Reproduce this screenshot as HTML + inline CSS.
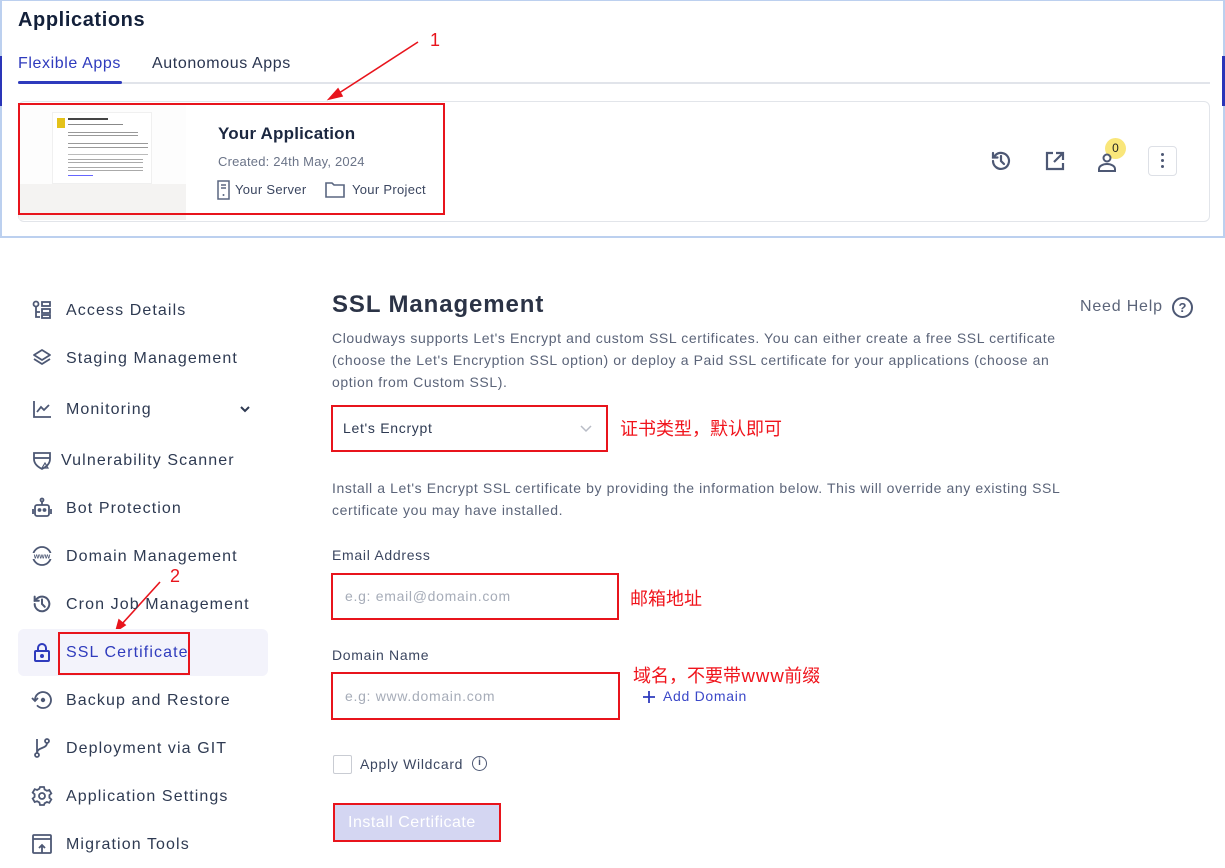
<!DOCTYPE html>
<html><head><meta charset="utf-8"><style>
*{box-sizing:border-box;margin:0;padding:0}
body{width:1225px;height:868px;background:#fff;font-family:"Liberation Sans","Noto Sans CJK SC",sans-serif;position:relative;overflow:hidden;color:#3b4660}
.a{position:absolute;white-space:nowrap}
.red{border:2px solid #e8141c;position:absolute}
.cn{color:#f0141c;font-size:18px;font-family:"Noto Sans CJK SC",sans-serif;letter-spacing:0}
.nav{position:absolute;left:66px;font-size:16px;color:#2e3a52;transform:translateY(-50%);letter-spacing:1.1px;margin-top:1px}
.ic{position:absolute;left:31px;width:22px;height:22px;transform:translateY(-50%)}
.p{font-size:14px;color:#5b6479;line-height:22px;letter-spacing:0.6px}
.s{letter-spacing:0.7px}
</style></head><body>
<!-- top panel -->
<div class="a" style="left:0;top:0;width:1225px;height:238px;border:2px solid #bcd0ef;border-top:1px solid #bcd0ef"></div>
<div class="a" style="left:0;top:56px;width:2px;height:50px;background:#2a35b8"></div>
<div class="a" style="left:1222px;top:56px;width:3px;height:50px;background:#2a35b8"></div>
<div class="a" style="left:18px;top:9px;font-size:20px;font-weight:bold;color:#13203a;letter-spacing:0.6px">Applications</div>
<div class="a" style="left:18px;top:55px;font-size:16px;color:#2f3bbd;letter-spacing:0.6px">Flexible Apps</div>
<div class="a" style="left:152px;top:55px;font-size:16px;color:#2a3550;letter-spacing:0.6px">Autonomous Apps</div>
<div class="a" style="left:18px;top:82px;width:1192px;height:2px;background:#e1e4ea"></div>
<div class="a" style="left:18px;top:81px;width:104px;height:3px;background:#2f3bbd;border-radius:2px"></div>
<div class="a" style="left:18px;top:101px;width:1192px;height:121px;border:1px solid #e2e5ea;border-radius:6px"></div>
<div class="a" style="left:19px;top:104px;width:167px;height:116px;background:#f4f3f2"></div>
<div class="a" style="left:19px;top:104px;width:167px;height:80px;background:#fdfdfd"></div>
<div class="a" style="left:52px;top:112px;width:100px;height:72px;background:#fff;border:1px solid #f0f0f0"></div>
<div class="a" style="left:57px;top:118px;width:8px;height:10px;background:#e4c21a"></div>
<div class="a" style="left:68px;top:118px;width:40px;height:2px;background:#444"></div>
<div class="a" style="left:68px;top:124px;width:55px;height:1px;background:#888"></div>
<div class="a" style="left:68px;top:132px;width:70px;height:4px;border-top:1px solid #999;border-bottom:1px solid #999"></div>
<div class="a" style="left:68px;top:143px;width:80px;height:5px;border-top:1px solid #999;border-bottom:1px solid #999"></div>
<div class="a" style="left:68px;top:154px;width:80px;height:1px;background:#bbb"></div>
<div class="a" style="left:68px;top:159px;width:75px;height:4px;border-top:1px solid #aaa;border-bottom:1px solid #aaa"></div>
<div class="a" style="left:68px;top:167px;width:75px;height:4px;border-top:1px solid #aaa;border-bottom:1px solid #aaa"></div>
<div class="a" style="left:68px;top:175px;width:25px;height:1px;background:#66f"></div>
<div class="a" style="left:218px;top:124px;font-size:17px;font-weight:bold;color:#1b2740;letter-spacing:0.2px">Your Application</div>
<div class="a" style="left:218px;top:154px;font-size:13px;color:#6b7488;letter-spacing:0.2px">Created: 24th May, 2024</div>
<svg class="a" style="left:217px;top:180px" width="14" height="20" viewBox="0 0 14 20"><rect x="1" y="1" width="11" height="18" fill="none" stroke="#5a6680" stroke-width="1.5"/><line x1="4" y1="5" x2="9" y2="5" stroke="#5a6680" stroke-width="1.5"/><line x1="4" y1="8" x2="9" y2="8" stroke="#5a6680" stroke-width="1.5"/><circle cx="6.5" cy="15" r="1" fill="#5a6680"/></svg>
<div class="a" style="left:235px;top:182px;font-size:13px;color:#3b4660;letter-spacing:0.3px">Your Server</div>
<svg class="a" style="left:325px;top:181px" width="20" height="17" viewBox="0 0 20 17"><path d="M1 2h6l2 2h10v12H1z" fill="none" stroke="#5a6680" stroke-width="1.6"/></svg>
<div class="a" style="left:352px;top:182px;font-size:13px;color:#3b4660;letter-spacing:0.3px">Your Project</div>
<div class="red" style="left:18px;top:103px;width:427px;height:112px"></div>
<svg class="a" style="left:0;top:0" width="1225" height="868" viewBox="0 0 1225 868">
<g stroke="#e8141c" stroke-width="1.6" fill="#e8141c"><line x1="418" y1="42" x2="336" y2="95"/><polygon points="329,99 338,89 342,96"/><line x1="160" y1="582" x2="121" y2="625"/><polygon points="116,631 119,620 125,625"/></g>
</svg>
<div class="a" style="left:430px;top:30px;font-size:18px;color:#e8141c">1</div>
<div class="a" style="left:170px;top:566px;font-size:18px;color:#e8141c">2</div>
<!-- right icons -->
<svg class="a" style="left:989px;top:149px" width="24" height="24" viewBox="0 0 24 24" fill="none" stroke="#4d5874" stroke-width="2.2" stroke-linecap="round"><path d="M4 12a8 8 0 1 0 2.3-5.7L4 8.5"/><path d="M4 4v4.5h4.5"/><path d="M12 7v5l3 3"/></svg>
<svg class="a" style="left:1044px;top:150px" width="22" height="22" viewBox="0 0 22 22" fill="none" stroke="#4d5874" stroke-width="2.2"><path d="M9 3H3v16h16v-6"/><path d="M12 3h7v7M19 3l-9 9"/></svg>
<div class="a" style="left:1105px;top:138px;width:21px;height:21px;border-radius:50%;background:#f9e67a;font-size:12px;text-align:center;line-height:21px;color:#222">0</div>
<svg class="a" style="left:1097px;top:152px" width="20" height="20" viewBox="0 0 20 20" fill="none" stroke="#4d5874" stroke-width="2"><circle cx="10" cy="6" r="3.5"/><path d="M2 19v-2c0-3 4-5 8-5s8 2 8 5v2z"/></svg>
<div class="a" style="left:1148px;top:146px;width:29px;height:30px;border:1px solid #dde0e6;border-radius:4px"></div>
<div class="a" style="left:1161px;top:153px;width:3px;height:3px;border-radius:50%;background:#4d5874;box-shadow:0 6px 0 #4d5874,0 12px 0 #4d5874"></div>
<!-- sidebar -->
<div class="a" style="left:18px;top:629px;width:250px;height:47px;background:#f3f3fb;border-radius:6px"></div>
<svg class="ic" style="top:310px" viewBox="0 0 22 22" fill="none" stroke="#4d5874" stroke-width="1.8"><circle cx="5" cy="5" r="2.5"/><path d="M5 8v10h4M5 13h4"/><rect x="11" y="3" width="8" height="4"/><rect x="11" y="10" width="8" height="4"/><rect x="11" y="16" width="8" height="3"/></svg>
<div class="nav" style="top:310px">Access Details</div>
<svg class="ic" style="top:358px" viewBox="0 0 22 22" fill="none" stroke="#4d5874" stroke-width="1.8" stroke-linejoin="round"><path d="M11 3l8 5-8 5-8-5z"/><path d="M3 12l8 5 8-5"/></svg>
<div class="nav" style="top:358px">Staging Management</div>
<svg class="ic" style="top:409px" viewBox="0 0 22 22" fill="none" stroke="#4d5874" stroke-width="1.8"><path d="M3 3v16h17"/><path d="M6 14l4-5 3 3 5-5"/></svg>
<div class="nav" style="top:409px">Monitoring</div>
<svg class="a" style="left:239px;top:404px" width="12" height="10" viewBox="0 0 12 10"><path d="M2 3l4 4 4-4" fill="none" stroke="#2e3a52" stroke-width="2"/></svg>
<svg class="ic" style="top:460px" viewBox="0 0 22 22" fill="none" stroke="#4d5874" stroke-width="1.8"><path d="M3 4h16v6c0 5-4 8-8 10-4-2-8-5-8-10z"/><path d="M3 9h16"/><path d="M14 14l3 5h-6z" stroke-width="1.2"/></svg>
<div class="nav" style="top:460px;left:61px">Vulnerability Scanner</div>
<svg class="ic" style="top:508px" viewBox="0 0 22 22" fill="none" stroke="#4d5874" stroke-width="1.8"><circle cx="11" cy="3" r="1.5"/><path d="M11 5v3"/><rect x="4" y="8" width="14" height="11" rx="2"/><circle cx="8.5" cy="13" r="1" fill="#4d5874"/><circle cx="13.5" cy="13" r="1" fill="#4d5874"/><path d="M2 12v5M20 12v5"/></svg>
<div class="nav" style="top:508px">Bot Protection</div>
<svg class="ic" style="top:556px" viewBox="0 0 22 22"><circle cx="11" cy="11" r="9" fill="none" stroke="#4d5874" stroke-width="1.8"/><rect x="0" y="8" width="22" height="6" fill="#fff"/><text x="11" y="13.5" font-size="7" font-weight="bold" text-anchor="middle" fill="#4d5874" font-family="Liberation Sans">www</text></svg>
<div class="nav" style="top:556px">Domain Management</div>
<svg class="ic" style="top:604px" viewBox="0 0 24 24" fill="none" stroke="#4d5874" stroke-width="2.2" stroke-linecap="round"><path d="M4 12a8 8 0 1 0 2.3-5.7L4 8.5"/><path d="M4 4v4.5h4.5"/><path d="M12 7v5l3 3"/></svg>
<div class="nav" style="top:604px">Cron Job Management</div>
<svg class="ic" style="top:652px" viewBox="0 0 22 22" fill="none" stroke="#2f3bbd" stroke-width="2"><rect x="4" y="10" width="14" height="10" rx="1"/><path d="M7 10V7a4 4 0 0 1 8 0v3"/><circle cx="11" cy="15" r="1" fill="#2f3bbd"/></svg>
<div class="nav" style="top:652px;color:#2f3bbd">SSL Certificate</div>
<div class="red" style="left:58px;top:632px;width:132px;height:43px"></div>
<svg class="ic" style="top:700px" viewBox="0 0 22 22" fill="none" stroke="#4d5874" stroke-width="1.8"><path d="M4 11a8 8 0 1 1 2 5.3"/><path d="M1 9l3 3 3-3"/><circle cx="12" cy="11" r="1.3" fill="#4d5874"/></svg>
<div class="nav" style="top:700px">Backup and Restore</div>
<svg class="ic" style="top:748px" viewBox="0 0 22 22" fill="none" stroke="#4d5874" stroke-width="1.8"><circle cx="6" cy="18" r="2"/><circle cx="16" cy="4" r="2"/><path d="M6 2v14M16 6c0 6-10 4-10 10"/></svg>
<div class="nav" style="top:748px">Deployment via GIT</div>
<svg class="ic" style="top:796px" viewBox="0 0 22 22" fill="none" stroke="#4d5874" stroke-width="1.8"><circle cx="11" cy="11" r="3"/><path d="M9 2h4l.6 2.5 2.3 1.3 2.4-.8 2 3.4-1.9 1.7v2.6l1.9 1.7-2 3.4-2.4-.8-2.3 1.3L13 20H9l-.6-2.5-2.3-1.3-2.4.8-2-3.4 1.9-1.7V9.3L1.7 7.6l2-3.4 2.4.8 2.3-1.3z"/></svg>
<div class="nav" style="top:796px">Application Settings</div>
<svg class="ic" style="top:844px" viewBox="0 0 22 22" fill="none" stroke="#4d5874" stroke-width="1.8"><rect x="2" y="2" width="18" height="18" rx="1"/><path d="M2 6h18M11 20v-8M8 15l3-3 3 3"/></svg>
<div class="nav" style="top:844px">Migration Tools</div>
<!-- main -->
<div class="a" style="left:332px;top:291px;font-size:24px;font-weight:bold;color:#2b3346;letter-spacing:0.9px">SSL Management</div>
<div class="a" style="left:1080px;top:298px;font-size:16px;color:#5b6479;letter-spacing:0.8px">Need Help</div>
<div class="a" style="left:1172px;top:297px;width:21px;height:21px;border:2px solid #4d5874;border-radius:50%;font-size:13px;font-weight:bold;text-align:center;line-height:17px;color:#4d5874">?</div>
<div class="a p" style="left:332px;top:327px;white-space:normal;width:736px">Cloudways supports Let's Encrypt and custom SSL certificates. You can either create a free SSL certificate (choose the Let's Encryption SSL option) or deploy a Paid SSL certificate for your applications (choose an option from Custom SSL).</div>
<div class="red" style="left:331px;top:405px;width:277px;height:47px"></div>
<div class="a s" style="left:343px;top:420px;font-size:14px;color:#2e3a52">Let's Encrypt</div>
<svg class="a" style="left:579px;top:424px" width="14" height="10" viewBox="0 0 14 10"><path d="M2 2l5 5 5-5" fill="none" stroke="#b8bcc6" stroke-width="1.5"/></svg>
<div class="a cn" style="left:620px;top:415px">证书类型，默认即可</div>
<div class="a p" style="left:332px;top:477px;white-space:normal;width:736px">Install a Let's Encrypt SSL certificate by providing the information below. This will override any existing SSL certificate you may have installed.</div>
<div class="a s" style="left:332px;top:547px;font-size:14px;color:#3b4660">Email Address</div>
<div class="red" style="left:331px;top:573px;width:288px;height:47px"></div>
<div class="a s" style="left:345px;top:588px;font-size:14px;color:#a6acb8">e.g: email@domain.com</div>
<div class="a cn" style="left:630px;top:585px">邮箱地址</div>
<div class="a s" style="left:332px;top:647px;font-size:14px;color:#3b4660">Domain Name</div>
<div class="red" style="left:331px;top:672px;width:289px;height:48px"></div>
<div class="a s" style="left:345px;top:688px;font-size:14px;color:#a6acb8">e.g: www.domain.com</div>
<div class="a cn" style="left:633px;top:662px">域名，不要带www前缀</div>
<svg class="a" style="left:642px;top:690px" width="14" height="14" viewBox="0 0 14 14"><path d="M7 1v12M1 7h12" stroke="#2f3bbd" stroke-width="1.8"/></svg>
<div class="a s" style="left:663px;top:688px;font-size:14px;color:#3b48c8">Add Domain</div>
<div class="a" style="left:333px;top:755px;width:19px;height:19px;border:1.5px solid #c9ccd3;border-radius:2px"></div>
<div class="a s" style="left:360px;top:756px;font-size:14px;color:#3b4660">Apply Wildcard</div>
<div class="a" style="left:472px;top:756px;width:15px;height:15px;border:1.5px solid #4d5874;border-radius:50%;font-size:10px;font-weight:bold;text-align:center;line-height:12px;color:#4d5874">i</div>
<div class="a" style="left:334px;top:804px;width:166px;height:37px;background:#d4d6f2"></div>
<div class="red" style="left:333px;top:803px;width:168px;height:39px"></div>
<div class="a" style="left:348px;top:814px;font-size:16px;color:#fff;letter-spacing:0.5px">Install Certificate</div>
</body></html>
